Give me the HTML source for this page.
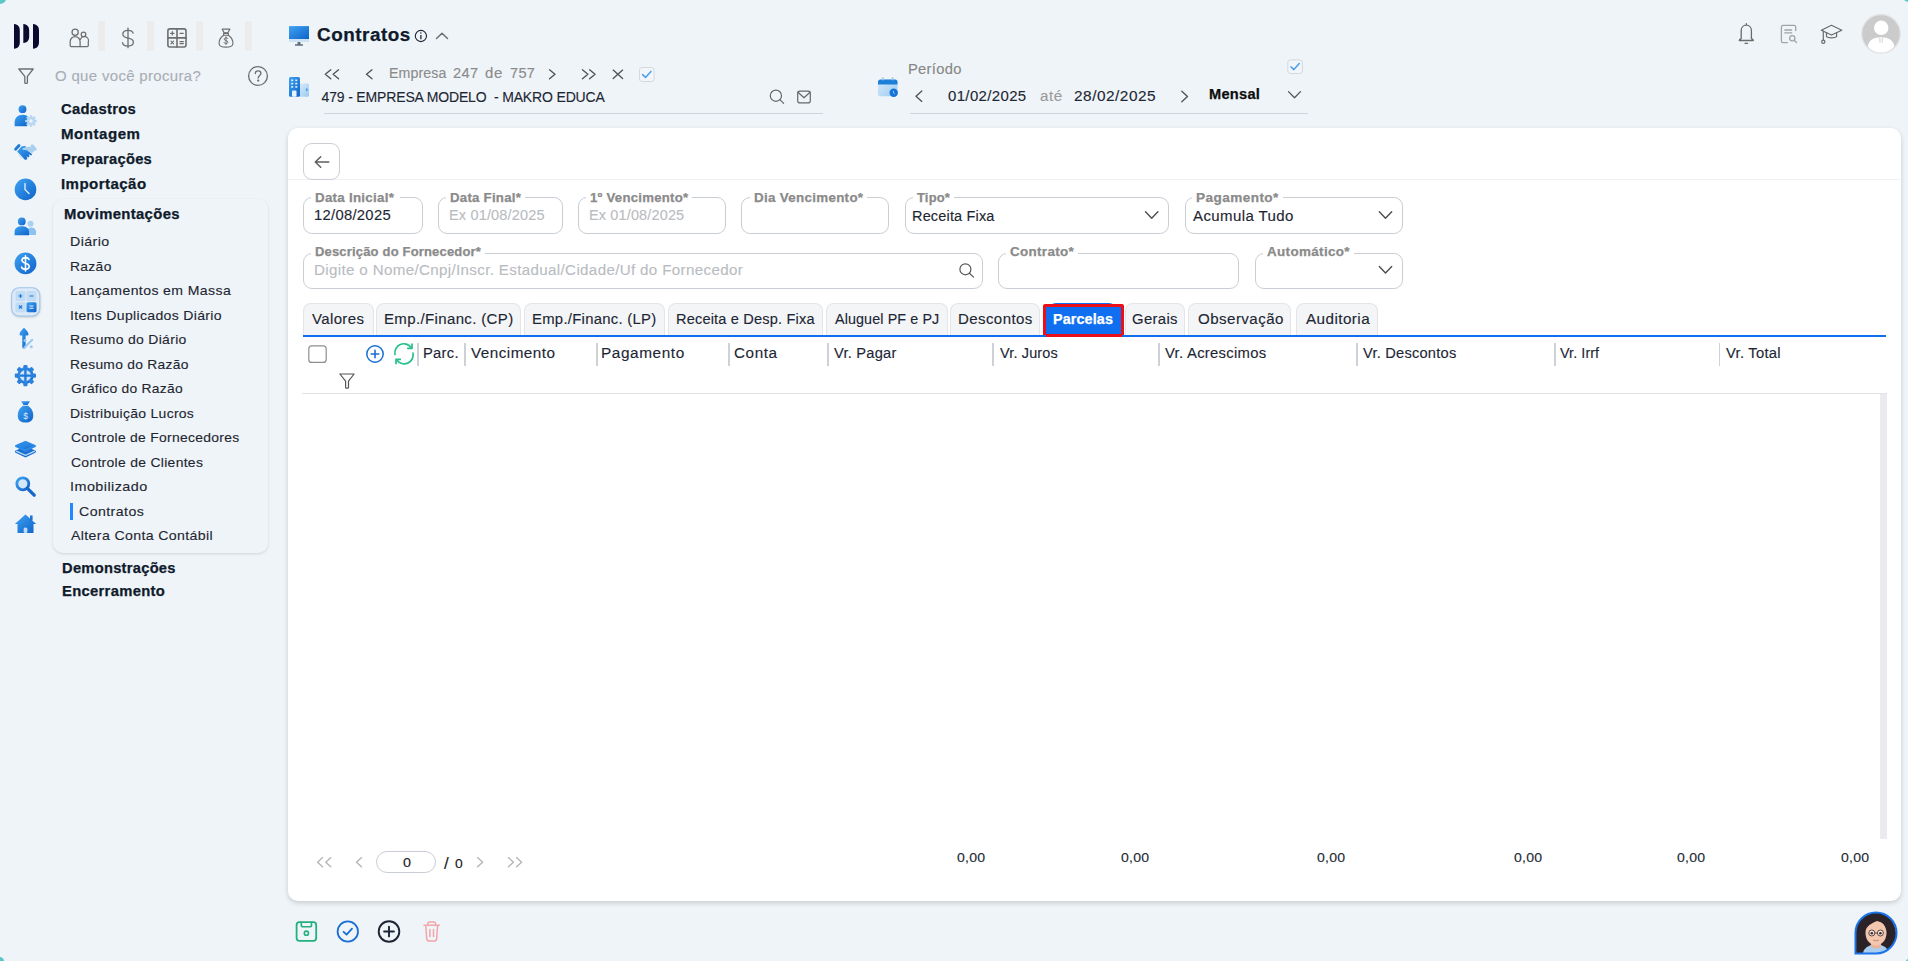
<!DOCTYPE html>
<html><head><meta charset="utf-8">
<style>
*{box-sizing:border-box;margin:0;padding:0}
html,body{width:1908px;height:961px;overflow:hidden;background:#eff4f8;font-family:"Liberation Sans",sans-serif}
.t{position:absolute;white-space:nowrap;-webkit-text-stroke:0.12px currentColor}
.b{-webkit-text-stroke:0.25px currentColor}
.a{position:absolute}
.fld{position:absolute;border:1px solid #c9ced5;border-radius:9px;background:#fff}
.lblbg{position:absolute;background:#fff;height:4px}
.tab{position:absolute;top:303px;height:32px;background:#f4f5f6;border:1px solid #e3e5e8;border-bottom:none;border-radius:8px 8px 0 0}
.sep{position:absolute;top:343px;width:1.6px;height:22.5px;background:#cdd1d8}
</style></head><body>
<!-- corners -->
<div class="a" style="left:-7px;top:-6px;width:13px;height:10px;border-radius:50%;background:#5cc7c7"></div>
<div class="a" style="left:1904px;top:-4px;width:10px;height:6px;border-radius:50%;background:#5cc7c7"></div>
<div class="a" style="left:-5px;top:957px;width:9px;height:8px;border-radius:50%;background:#5cc7c7"></div>
<div class="a" style="left:1906px;top:959px;width:5px;height:5px;border-radius:50%;background:#5cc7c7"></div>

<!-- sidebar submenu card -->
<div class="a" style="left:53px;top:199px;width:215px;height:354px;border-radius:10px;background:#eff4f8;box-shadow:0 1px 3px rgba(0,0,0,0.13)"></div>
<div class="a" style="left:70.3px;top:503px;width:2.9px;height:17px;background:#2089ff"></div>

<!-- top separators -->
<div class="a" style="left:98px;top:21px;width:7px;height:30px;background:#ececec"></div>
<div class="a" style="left:147px;top:21px;width:7px;height:30px;background:#ececec"></div>
<div class="a" style="left:196px;top:21px;width:7px;height:30px;background:#ececec"></div>
<div class="a" style="left:245px;top:21px;width:7px;height:30px;background:#ececec"></div>

<!-- underlines -->
<div class="a" style="left:324px;top:113px;width:499px;height:1px;background:#d0d4da"></div>
<div class="a" style="left:910px;top:113px;width:398px;height:1px;background:#d0d4da"></div>

<!-- main card -->
<div class="a" style="left:288px;top:128px;width:1613px;height:773px;border-radius:10px;background:#fff;box-shadow:0 2px 5px rgba(0,0,0,0.17)"></div>
<div class="a" style="left:288px;top:178.5px;width:1613px;height:1px;background:#f1f2f4"></div>
<div class="a" style="left:303px;top:143px;width:36.6px;height:36.6px;border:1px solid #c9ced5;border-radius:9px;background:#fff"></div>

<!-- fields row 1 -->
<div class="fld" style="left:303px;top:197.3px;width:120px;height:36.4px"></div>
<div class="fld" style="left:438px;top:197.3px;width:125px;height:36.4px"></div>
<div class="fld" style="left:578px;top:197.3px;width:147.7px;height:36.4px"></div>
<div class="fld" style="left:741px;top:197.3px;width:148.3px;height:36.4px"></div>
<div class="fld" style="left:905px;top:197.3px;width:264.2px;height:36.4px"></div>
<div class="fld" style="left:1185px;top:197.3px;width:217.5px;height:36.4px"></div>
<!-- fields row 2 -->
<div class="fld" style="left:303px;top:252.5px;width:679.5px;height:36px"></div>
<div class="fld" style="left:998px;top:252.5px;width:241.4px;height:36px"></div>
<div class="fld" style="left:1255px;top:252.5px;width:147.5px;height:36px"></div>
<!-- label gaps -->
<div class="lblbg" style="left:310.6px;top:195px;width:89px"></div>
<div class="lblbg" style="left:446px;top:195px;width:79px"></div>
<div class="lblbg" style="left:586px;top:195px;width:106px"></div>
<div class="lblbg" style="left:749.5px;top:195px;width:117px"></div>
<div class="lblbg" style="left:913px;top:195px;width:41px"></div>
<div class="lblbg" style="left:1192px;top:195px;width:90.5px"></div>
<div class="lblbg" style="left:310.6px;top:250.5px;width:174px"></div>
<div class="lblbg" style="left:1006px;top:250.5px;width:72px"></div>
<div class="lblbg" style="left:1263px;top:250.5px;width:90.5px"></div>

<!-- tabs -->
<div class="tab" style="left:303.2px;width:70.4px"></div>
<div class="tab" style="left:376.3px;width:145.1px"></div>
<div class="tab" style="left:524.1px;width:141.4px"></div>
<div class="tab" style="left:668.3px;width:155.2px"></div>
<div class="tab" style="left:826.3px;width:121.3px"></div>
<div class="tab" style="left:950.4px;width:90px"></div>
<div class="a" style="left:1049px;top:302.6px;width:67px;height:10px;background:#0f6ff0;border-radius:7px 7px 0 0"></div>
<div class="a" style="left:1043.2px;top:304px;width:80.5px;height:32.7px;background:#0f6ff0;border:3px solid #ea0f18;border-radius:2px"></div>
<div class="tab" style="left:1125px;width:60.4px"></div>
<div class="tab" style="left:1188.1px;width:103.4px"></div>
<div class="tab" style="left:1296.3px;width:81.6px"></div>
<div class="a" style="left:303px;top:335px;width:1583px;height:2.2px;background:#0f6ff0"></div>
<div class="a" style="left:1045.5px;top:335px;width:76px;height:2px;background:#ea0f18"></div>

<!-- table header -->
<div class="sep" style="left:417.2px"></div>
<div class="sep" style="left:464px"></div>
<div class="sep" style="left:596px"></div>
<div class="sep" style="left:728px"></div>
<div class="sep" style="left:827.2px"></div>
<div class="sep" style="left:992.2px"></div>
<div class="sep" style="left:1158px"></div>
<div class="sep" style="left:1356.4px"></div>
<div class="sep" style="left:1554.1px"></div>
<div class="sep" style="left:1718.9px"></div>
<div class="a" style="left:302px;top:393px;width:1585px;height:1px;background:#e2e3e5"></div>
<div class="a" style="left:1880.2px;top:394px;width:6.8px;height:444.7px;background:#e9ebee"></div>

<!-- pagination input -->
<div class="a" style="left:376.2px;top:851.3px;width:59.4px;height:21.5px;border:1px solid #c9ced5;border-radius:11px"></div>

<!-- bottom avatar -->
<svg class="a" style="left:1854px;top:911px" width="44" height="44" viewBox="0 0 44 44">
<defs><clipPath id="avc"><path d="M1.5,42.5 V22 A20.5,20.5 0 1 1 22,42.5 Z"/></clipPath></defs>
<g clip-path="url(#avc)">
<rect x="0" y="0" width="44" height="44" fill="#2b2327"/>
<path d="M30,2 Q40,8 42,22 L44,0 Z" fill="#8d8488"/>
<path d="M8,44 Q10,34 22,33 Q34,34 36,44 Z" fill="#a9cdf0"/>
<path d="M17,30 H27 V36 Q22,39 17,36 Z" fill="#e9b49a"/>
<ellipse cx="22" cy="22" rx="10.5" ry="12.5" fill="#f3c7ae"/>
<path d="M10,20 Q12,7 24,6.5 Q33,7 34.5,18 Q30,11 23,10 Q16,12 10,20 Z" fill="#2b2327"/>
<path d="M10.5,19 Q11,30 9,42 L6,42 Q5,25 10.5,19 Z" fill="#2b2327"/>
<path d="M33.5,18 Q34,30 36,40 L40,40 Q39,25 33.5,18 Z" fill="#2b2327"/>
<circle cx="17.8" cy="22" r="3" fill="#fbe9df" stroke="#4a3434" stroke-width="0.9"/>
<circle cx="26.4" cy="22" r="3" fill="#fbe9df" stroke="#4a3434" stroke-width="0.9"/>
<circle cx="17.8" cy="22.2" r="1.3" fill="#3a2a2a"/>
<circle cx="26.4" cy="22.2" r="1.3" fill="#3a2a2a"/>
<path d="M20.8,22 H23.4" stroke="#4a3434" stroke-width="0.8"/>
<path d="M19,29 Q22,30.8 25,29" stroke="#c9806f" stroke-width="0.9" fill="none"/>
</g>
<path d="M1.5,42.5 V22 A20.5,20.5 0 1 1 22,42.5 Z" fill="none" stroke="#1a73e8" stroke-width="2"/>
</svg>
<div class="a" style="left:11.5px;top:287.6px;width:28.5px;height:28.5px;border-radius:8px;box-shadow:0 1px 3px rgba(0,0,0,0.22)"></div>
<svg class="a" style="left:0;top:0" width="1908" height="961" viewBox="0 0 1908 961">
<defs>
<linearGradient id="gb" x1="0" y1="0" x2="1" y2="1"><stop offset="0" stop-color="#3ea3f2"/><stop offset="1" stop-color="#0f62c9"/></linearGradient>
<linearGradient id="gl" x1="0" y1="0" x2="1" y2="1"><stop offset="0" stop-color="#d8ebfb"/><stop offset="1" stop-color="#9ccaf1"/></linearGradient>
</defs>
<!-- logo -->
<g fill="#0b0a2e">
<path d="M14,24 C18.6,24.3 19.8,27.5 19.8,31 L19.8,42 C19.8,45.5 18.6,48.5 14,48.8 Z"/>
<path d="M23.3,24 C27.9,24.3 29.2,27.5 29.2,31 L29.2,36.3 C29.2,39.8 27.9,42.8 23.3,43 Z"/>
<path d="M33,24 C37.6,24.3 39,27.5 39,31 L39,42 C39,45.5 37.6,48.5 33,48.8 Z"/>
</g>
<!-- top gray icons -->
<g fill="none" stroke="#6e6e6e" stroke-width="1.25" stroke-linecap="round" stroke-linejoin="round">
<circle cx="75.15" cy="32.2" r="3.1"/>
<path d="M70.2,45.5 V41.5 A4.95,4.95 0 0 1 80.1,41.5 V46.5 H71.2 Q70.2,46.5 70.2,45.5 Z"/>
<circle cx="83.5" cy="34.4" r="2.3"/>
<path d="M80.4,39.4 A4.1,4.1 0 0 1 88.3,41.9 V45.6 Q88.3,46.5 87.4,46.5 H80.1"/>
<path d="M128,28.2 V47.7" stroke-width="1.3"/>
<path d="M133.1,33.2 C132.7,31.3 130.8,30.3 128,30.3 C124.6,30.3 122.8,32 122.8,34.3 C122.8,39.8 133.4,36.6 133.4,42.1 C133.4,44.6 131.2,46.1 128,46.1 C124.8,46.1 122.8,44.7 122.5,42.6" stroke-width="1.3"/>
<rect x="167.9" y="28.9" width="18.1" height="18.1" rx="2" stroke-width="1.6"/>
<path d="M177,28.9 V47 M167.9,37.9 H186" stroke-width="1.6"/>
<path d="M170.6,33.3 H174 M172.3,31.6 V35 M180,33.3 H183.3 M171,41.2 L173.6,43.8 M173.6,41.2 L171,43.8 M179.9,41.6 H183.4 M179.9,43.6 H183.4" stroke-width="1.2"/>
<path d="M222.2,29.2 H229.8 L227.9,32.8 H224.1 Z" stroke-width="1.2"/>
<path d="M223.6,33.4 H228.4 V35.2 H223.6 Z" stroke-width="1.1"/>
<path d="M223.6,35.3 C219.6,38.2 218.9,41.8 219.1,44 C219.4,46.4 221.8,47.1 226,47.1 C230.2,47.1 232.6,46.4 232.9,44 C233.1,41.8 232.4,38.2 228.4,35.3" stroke-width="1.2"/>
<path d="M227.8,38.6 C227.4,37.9 226.8,37.7 226,37.7 C224.9,37.7 224.2,38.3 224.2,39.1 C224.2,41 227.9,40.2 227.9,42.2 C227.9,43 227.1,43.6 226,43.6 C225,43.6 224.3,43.2 224,42.5 M226,36.8 V44.4" stroke-width="1"/>
<!-- filter sidebar -->
<path d="M18.8,69 H33.2 L27.4,76.3 V82.5 Q27.4,83.4 26.5,83.4 H25.6 Q24.8,83.4 24.8,82.5 V76.3 Z" stroke-width="1.3"/>
<circle cx="258" cy="76" r="9.4" stroke-width="1.35"/>
<path d="M255.3,73.6 C255.3,71.9 256.5,70.9 258.1,70.9 C259.8,70.9 260.9,72 260.9,73.4 C260.9,75.4 258.2,75.6 258.2,77.9" stroke-width="1.35"/>
<circle cx="258.2" cy="80.6" r="0.5" fill="#6e6e6e"/>
<!-- chevron up -->
<path d="M436.5,38.5 L442,33.2 L447.5,38.5" stroke-width="1.5"/>
</g>
<!-- monitor -->
<rect x="289" y="26.1" width="20" height="13" fill="url(#gb)"/>
<rect x="289" y="39" width="20" height="3" fill="#cfe2f3"/>
<path d="M297.5,42 H300.5 V44.3 H303 V45.7 H295 V44.3 H297.5 Z" fill="#5d6f7e"/>
<!-- info -->
<circle cx="420.9" cy="36" r="5.6" fill="none" stroke="#1c2634" stroke-width="1.1"/>
<path d="M420.9,35 V39.2" stroke="#1c2634" stroke-width="1.3"/>
<circle cx="420.9" cy="33.1" r="0.75" fill="#1c2634"/>
<!-- building -->
<rect x="299" y="83.5" width="10" height="13.3" rx="1.5" fill="url(#gl)"/>
<rect x="289" y="77" width="11" height="19.8" rx="1.5" fill="url(#gb)"/>
<g fill="#e8f3fd"><rect x="291.2" y="79.5" width="2" height="1.6"/><rect x="295.3" y="79.5" width="2" height="1.6"/><rect x="291.2" y="82.8" width="2" height="1.6"/><rect x="295.3" y="82.8" width="2" height="1.6"/><rect x="291.2" y="86.1" width="2" height="1.6"/><rect x="295.3" y="86.1" width="2" height="1.6"/><rect x="292" y="90.5" width="4.5" height="6.3" rx="1"/></g>
<rect x="306" y="88.5" width="1.5" height="2.5" fill="#3b97ea"/>
<!-- empresa nav -->
<g fill="none" stroke="#505050" stroke-width="1.3" stroke-linecap="round" stroke-linejoin="round">
<path d="M330.8,69.8 L325.3,74.3 L330.8,78.8 M338.6,69.8 L333.1,74.3 L338.6,78.8"/>
<path d="M372,69.8 L366.5,74.3 L372,78.8"/>
<path d="M549.5,69.8 L555,74.3 L549.5,78.8"/>
<path d="M582.4,69.8 L587.9,74.3 L582.4,78.8 M589.6,69.8 L595.1,74.3 L589.6,78.8"/>
<path d="M613.2,70.1 L622.6,78.5 M622.6,70.1 L613.2,78.5"/>
</g>
<rect x="639.5" y="67.5" width="14.6" height="14" rx="2.6" fill="#f2f5f9" stroke="#d5d8dc" stroke-width="1"/>
<path d="M642.6,74.6 L645.5,77.4 L651,71.4" fill="none" stroke="#4aa0ef" stroke-width="1.5" stroke-linecap="round" stroke-linejoin="round"/>
<g fill="none" stroke="#676767" stroke-width="1.2" stroke-linecap="round" stroke-linejoin="round">
<circle cx="775.9" cy="95.7" r="5.6"/>
<path d="M779.9,99.7 L783.6,103.4"/>
<rect x="797.7" y="91.1" width="12.6" height="11.8" rx="2.2"/>
<path d="M798,92.2 L804,97.8 L810,92.2"/>
</g>
<!-- calendar -->
<rect x="878" y="79.5" width="19.5" height="16.8" rx="2.5" fill="url(#gl)"/>
<path d="M878,82 Q878,79.5 880.5,79.5 H895 Q897.5,79.5 897.5,82 V84.5 H878 Z" fill="#1e7fd8"/>
<rect x="882" y="77" width="1.6" height="3.5" rx="0.8" fill="#9cc9ef"/>
<rect x="891.8" y="77" width="1.6" height="3.5" rx="0.8" fill="#9cc9ef"/>
<circle cx="893.7" cy="92.7" r="4.2" fill="#1573d8"/>
<path d="M893.4,90.8 V92.8 L894.9,94" fill="none" stroke="#bfe0fb" stroke-width="0.8"/>
<g fill="none" stroke="#505050" stroke-width="1.3" stroke-linecap="round" stroke-linejoin="round">
<path d="M921.8,91 L916,96.2 L921.8,101.4"/>
<path d="M1181.8,91.3 L1187.5,96.5 L1181.8,101.7"/>
<path d="M1288.5,91.6 L1294.5,97.7 L1300.5,91.6" stroke="#555"/>
</g>
<rect x="1287.8" y="59.9" width="14.6" height="13.6" rx="2.6" fill="#f2f5f9" stroke="#d5d8dc" stroke-width="1"/>
<path d="M1290.9,66.8 L1293.8,69.6 L1299.3,63.6" fill="none" stroke="#4aa0ef" stroke-width="1.5" stroke-linecap="round" stroke-linejoin="round"/>
<!-- top right -->
<g fill="none" stroke="#6b6b6b" stroke-width="1.3" stroke-linecap="round" stroke-linejoin="round">
<path d="M1746.3,23.6 V25.2 M1741.2,38.6 V30.5 C1741.2,27.3 1743.5,25.2 1746.3,25.2 C1749.1,25.2 1751.4,27.3 1751.4,30.5 V38.6 C1752.8,39.2 1753.3,39.8 1753.3,40.5 H1739.3 C1739.3,39.8 1739.8,39.2 1741.2,38.6 Z"/>
<path d="M1745,43.3 H1747.6" stroke-width="1.2"/>
<circle cx="1823.3" cy="41.7" r="1.6" stroke-width="1.2"/>
<path d="M1821.3,30.2 L1831.5,25.3 L1841.8,30.2 L1831.5,35 Z" stroke-width="1.25"/>
<path d="M1823.3,31.2 V40.1 M1826.5,32.6 V36.6 C1828,38.2 1835,38.2 1836.6,36.6 V32.6" stroke-width="1.2"/>
</g>
<g fill="none" stroke="#a3a3a3" stroke-width="1.3" stroke-linecap="round">
<path d="M1795.7,30.6 V26.9 Q1795.7,25.3 1794,25.3 H1783.1 Q1781.4,25.3 1781.4,27 V40.9 Q1781.4,42.6 1783.1,42.6 H1787.5"/>
<path d="M1784.8,30 H1791.7 M1784.8,32.9 H1791.7"/>
<circle cx="1792.3" cy="38.3" r="2.6"/>
<path d="M1794.2,40.2 L1796.5,42.5"/>
</g>
<circle cx="1881" cy="33.8" r="19.3" fill="#cbcbcb" stroke="#e4e4e4" stroke-width="1.3"/>
<circle cx="1881.2" cy="27.8" r="7.2" fill="#fff"/>
<path d="M1867.8,46.5 C1868.5,40.3 1873.5,37.3 1881,37.3 C1888.5,37.3 1893.5,40.3 1894.3,46.5 C1891,50.5 1886.5,52.6 1881,52.6 C1875.5,52.6 1871,50.5 1867.8,46.5 Z" fill="#fff"/>
<path d="M1879.8,38 L1880,42.8 M1882.3,38 L1882.1,42.8" stroke="#cbcbcb" stroke-width="0.9"/>

<!-- back arrow -->
<path d="M328.8,162 H315.5 M320.7,156.8 L315.3,162 L320.7,167.2" fill="none" stroke="#5e5e5e" stroke-width="1.5" stroke-linecap="round" stroke-linejoin="round"/>
<!-- field chevrons / search -->
<g fill="none" stroke="#4b4b4b" stroke-width="1.35" stroke-linecap="round" stroke-linejoin="round">
<path d="M1145.5,211.8 L1151.7,218.3 L1157.9,211.8"/>
<path d="M1379.3,211.8 L1385.5,218.3 L1391.7,211.8"/>
<path d="M1379.3,266.5 L1385.5,273 L1391.7,266.5"/>
</g>
<g fill="none" stroke="#555" stroke-width="1.2" stroke-linecap="round">
<circle cx="965.4" cy="269.3" r="5.5"/>
<path d="M969.4,273.3 L973.5,277.1"/>
</g>
<!-- table header icons -->
<rect x="308.8" y="345.8" width="17.4" height="16.6" rx="3" fill="#fff" stroke="#8e8e8e" stroke-width="1.2"/>
<circle cx="375" cy="354" r="8.2" fill="none" stroke="#1b6fd4" stroke-width="1.5"/>
<path d="M375,350.2 V357.8 M371.2,354 H378.8" stroke="#1b6fd4" stroke-width="1.6" stroke-linecap="round"/>
<g fill="none" stroke="#22c08d" stroke-width="1.7" stroke-linecap="round" stroke-linejoin="round">
<path d="M395,354.5 A9,9 0 0 1 411.2,347.6"/>
<path d="M413,353 A9,9 0 0 1 396.8,360"/>
<path d="M412,344 V348.3 H407.8"/>
<path d="M396,363.6 V359.4 H400.2"/>
</g>
<path d="M339.9,374 H354.1 L348.5,381.2 V387.3 Q348.5,388.2 347.6,388.2 H346.5 Q345.6,388.2 345.6,387.3 V381.2 Z" fill="none" stroke="#555" stroke-width="1.2" stroke-linejoin="round"/>
<!-- pagination -->
<g fill="none" stroke="#b3b3b3" stroke-width="1.3" stroke-linecap="round" stroke-linejoin="round">
<path d="M322.6,857.6 L317.6,862.2 L322.6,866.8 M330.8,857.6 L325.8,862.2 L330.8,866.8"/>
<path d="M361.5,857.6 L356.5,862.2 L361.5,866.8"/>
<path d="M477.6,857.6 L482.6,862.2 L477.6,866.8"/>
<path d="M508.4,857.6 L513.4,862.2 L508.4,866.8 M516.6,857.6 L521.6,862.2 L516.6,866.8"/>
</g>
<!-- bottom actions -->
<g fill="none" stroke-linecap="round" stroke-linejoin="round">
<path d="M299.4,922.2 H313.4 Q316.2,922.2 316.2,925 V938 Q316.2,940.8 313.4,940.8 H299.4 Q296.6,940.8 296.6,938 V925 Q296.6,922.2 299.4,922.2 Z" stroke="#22b07d" stroke-width="1.8"/>
<path d="M301.3,922.4 V925 Q301.3,926.8 303,926.8 H309.8 Q311.5,926.8 311.5,925 V922.4" stroke="#22b07d" stroke-width="1.6"/>
<circle cx="306.4" cy="933.2" r="2.1" stroke="#22b07d" stroke-width="1.6"/>
<circle cx="347.8" cy="931.5" r="10.2" stroke="#1b6fd4" stroke-width="1.8"/>
<path d="M343.6,931.8 L346.6,934.6 L352,928.7" stroke="#1b6fd4" stroke-width="1.8"/>
<circle cx="389" cy="931.5" r="10.3" stroke="#1c2634" stroke-width="1.9"/>
<path d="M389,926.6 V936.4 M384.1,931.5 H393.9" stroke="#1c2634" stroke-width="1.9"/>
<path d="M424,925.2 H439.4 M427.8,925 V923.7 Q427.8,922 429.5,922 H433.9 Q435.6,922 435.6,923.7 V925 M425.8,925.5 L426.7,938.6 Q426.9,941 429.3,941 H434.1 Q436.5,941 436.7,938.6 L437.6,925.5 M429.9,929.5 V936.6 M433.5,929.5 V936.6" stroke="#f3a6aa" stroke-width="1.5"/>
</g>

<!-- sidebar blue icons -->
<!-- 1 user gear -->
<circle cx="22.5" cy="109.2" r="3.9" fill="url(#gb)"/>
<path d="M14.6,126.2 V122.5 C14.6,117.8 18,114.8 22.5,114.8 C25,114.8 27,115.6 28.3,117 L27,126.2 Z" fill="url(#gb)"/>
<g transform="translate(31,121)"><circle r="4.2" fill="#b7d7f3"/><g fill="#b7d7f3"><rect x="-1.2" y="-5.8" width="2.4" height="11.6"/><rect x="-5.8" y="-1.2" width="11.6" height="2.4"/><rect x="-1.2" y="-5.8" width="2.4" height="11.6" transform="rotate(45)"/><rect x="-1.2" y="-5.8" width="2.4" height="11.6" transform="rotate(-45)"/></g><circle r="1.7" fill="#eff4f8"/></g>
<!-- 2 handshake -->
<path d="M15.6,149.2 L19,145.6" stroke="#1f7ad8" stroke-width="2.9" stroke-linecap="round"/>
<path d="M32.3,145.7 L35.3,149.1" stroke="#a9cff0" stroke-width="2.9" stroke-linecap="round"/>
<path d="M22.5,148.3 L26,147.3 L31,146.4 L35,150 L32,153.2 L27,150.3 L22.8,149.8 Z" fill="#a9cff0"/>
<path d="M17.2,151.5 L21.5,146.6 Q23,145.9 25.8,146.2 L26,147.3 L22.5,148.3 L22.8,149.8 L27,150.3 L32.2,154.3 L31.2,155.6 L28.6,154.2 L29.5,156.2 L28.4,157.6 L26.5,156.2 L27.4,158.6 L26,160 L24.6,159.6 Z" fill="url(#gb)"/>
<path d="M17.5,153 L19,154.5 M19,155.2 L20.6,156.8 M20.8,157 L22.2,158.4" stroke="#cfe3f6" stroke-width="1.2"/>
<!-- 3 clock -->
<circle cx="25.5" cy="189.4" r="10.8" fill="url(#gb)"/>
<path d="M25,183.5 V189.4 L29,193.5" fill="none" stroke="#d9ecfc" stroke-width="1.4" stroke-linecap="round"/>
<!-- 4 users -->
<circle cx="30.5" cy="223.8" r="3" fill="#a9d0f3"/>
<path d="M27,235 V231.5 C27,228.8 29,227.6 31,227.6 C33.5,227.6 36,229 36,232 V235 Z" fill="#8ec1ee"/>
<circle cx="21.8" cy="221.4" r="3.9" fill="url(#gb)"/>
<path d="M14.6,235.2 V231.8 C14.6,228 17.5,226.2 21.8,226.2 C26.1,226.2 29,228 29,231.8 V235.2 Z" fill="url(#gb)"/>
<!-- 5 dollar circle -->
<circle cx="25.5" cy="263.4" r="10.9" fill="url(#gb)"/>
<path d="M29,259.4 C28.5,258.3 27.3,257.6 25.5,257.6 C23.4,257.6 22,258.7 22,260.3 C22,264 29.2,262.3 29.2,266.3 C29.2,268 27.7,269.2 25.5,269.2 C23.5,269.2 22.1,268.4 21.6,267.1 M25.5,255.8 V271" fill="none" stroke="#fff" stroke-width="1.6" stroke-linecap="round"/>
<!-- 6 calculator highlighted -->
<rect x="11.6" y="287.8" width="28.2" height="28.2" rx="7.5" fill="#dceaf7" stroke="#9fc6ec" stroke-width="1.1"/>
<rect x="15.5" y="291" width="10" height="10" rx="1.5" fill="#c2dcf4"/>
<rect x="26.5" y="291" width="10" height="10" rx="1.5" fill="#c2dcf4"/>
<rect x="15.5" y="302.2" width="10" height="10" rx="1.5" fill="#c2dcf4"/>
<rect x="26.5" y="302.2" width="10" height="10" rx="1.5" fill="url(#gb)"/>
<path d="M18.5,296 H22.5 M20.5,294 V298 M29.5,296 H33.5 M19,305.5 L22,308.5 M22,305.5 L19,308.5" stroke="#1f79d6" stroke-width="1.2"/>
<path d="M29.5,306 H33.5 M29.5,308.3 H33.5" stroke="#e7f2fc" stroke-width="1.1"/>
<!-- 7 arrow percent -->
<path d="M24,327.8 C21.5,330 19.5,332.5 19.5,334.5 Q19.5,335.6 20.8,335.6 H22.3 V347.5 Q22.3,348.6 23.6,348.6 H24.3 Q25.6,348.6 25.6,347.5 V335.6 H27.2 Q28.5,335.6 28.5,334.5 C28.5,332.5 26.5,330 24,327.8 Z" fill="url(#gb)"/>
<path d="M24.3,347.8 L32.2,339.8" stroke="#9ccaf1" stroke-width="2.2" stroke-linecap="round"/>
<circle cx="25" cy="340.6" r="1.5" fill="#9ccaf1"/><circle cx="31.3" cy="346.8" r="1.5" fill="#9ccaf1"/>
<!-- 8 gear cross -->
<g transform="translate(25.4,375.6)"><circle r="8.3" fill="url(#gb)"/><g fill="#2a82dc"><rect x="-2.1" y="-10.6" width="4.2" height="21.2" rx="1"/><rect x="-10.6" y="-2.1" width="21.2" height="4.2" rx="1"/><rect x="-2.1" y="-10.6" width="4.2" height="21.2" rx="1" transform="rotate(45)"/><rect x="-2.1" y="-10.6" width="4.2" height="21.2" rx="1" transform="rotate(-45)"/></g><circle r="5.6" fill="#cfe3f6"/><path d="M0,-5.6 V5.6 M-5.6,0 H5.6" stroke="#1f7ad9" stroke-width="2.3"/></g>
<!-- 9 money bag -->
<path d="M21.2,401.3 H29.8 L27.6,405 H23.4 Z" fill="url(#gb)"/>
<path d="M23,405.8 C18.5,408.8 17.6,413 17.8,416.3 C18.1,420.8 21,422.6 25.5,422.6 C30,422.6 32.9,420.8 33.2,416.3 C33.4,413 32.5,408.8 28,405.8 Z" fill="url(#gb)"/>
<text x="25.5" y="419" font-size="8.5" font-family="Liberation Sans" fill="#d8ecfd" text-anchor="middle">$</text>
<!-- 10 layers -->
<path d="M25.5,447.5 L34.8,451.6 L25.5,456.3 L16.2,451.6 Z" fill="#1a6fd0" stroke="#1a6fd0" stroke-width="2.4" stroke-linejoin="round"/>
<path d="M16.2,451.2 L25.5,455.4 L34.8,451.2" fill="none" stroke="#bcdcf6" stroke-width="1.3"/>
<path d="M25.5,442 L34.8,446 L25.5,450.6 L16.2,446 Z" fill="url(#gb)" stroke="#2a8ae6" stroke-width="2.4" stroke-linejoin="round"/>
<!-- 11 search -->
<circle cx="22.8" cy="483.8" r="6" fill="#d4e8fa" stroke="url(#gb)" stroke-width="2.8"/>
<path d="M27.6,488.6 L34.2,495.2" stroke="#1567cc" stroke-width="3.3" stroke-linecap="round"/>
<!-- 12 home -->
<path d="M25.5,514.5 L14.8,524 H17.5 V533 H33.5 V524 H36.2 Z" fill="url(#gb)"/>
<rect x="30" y="515.5" width="2.6" height="5" fill="#1e73d2"/>
<rect x="23.6" y="527.5" width="3.8" height="5.5" rx="1.5" fill="#bcdaf5"/>
</svg>
<div class="t" style="left:55.20px;top:69.00px;font-size:14px;line-height:14px;font-weight:400;color:#a9aeb5;letter-spacing:0.313px;transform:scaleX(1.0689);transform-origin:0 0;">O que você procura?</div>
<div class="t b" style="left:61.30px;top:102.00px;font-size:14px;line-height:14px;font-weight:700;color:#0f1b2b;letter-spacing:0.299px;transform:scaleX(1.0552);transform-origin:0 0;">Cadastros</div>
<div class="t b" style="left:61.30px;top:127.00px;font-size:14px;line-height:14px;font-weight:700;color:#0f1b2b;letter-spacing:0.475px;transform:scaleX(1.0772);transform-origin:0 0;">Montagem</div>
<div class="t b" style="left:61.30px;top:152.00px;font-size:14px;line-height:14px;font-weight:700;color:#0f1b2b;letter-spacing:0.257px;transform:scaleX(1.0479);transform-origin:0 0;">Preparações</div>
<div class="t b" style="left:61.30px;top:177.00px;font-size:14px;line-height:14px;font-weight:700;color:#0f1b2b;letter-spacing:0.396px;transform:scaleX(1.0768);transform-origin:0 0;">Importação</div>
<div class="t b" style="left:63.50px;top:207.00px;font-size:14px;line-height:14px;font-weight:700;color:#0f1b2b;letter-spacing:0.329px;transform:scaleX(1.0596);transform-origin:0 0;">Movimentações</div>
<div class="t" style="left:69.91px;top:235.00px;font-size:13px;line-height:13px;font-weight:400;color:#1e2631;letter-spacing:0.372px;transform:scaleX(1.0931);transform-origin:0 0;">Diário</div>
<div class="t" style="left:69.94px;top:260.00px;font-size:13px;line-height:13px;font-weight:400;color:#1e2631;letter-spacing:0.344px;transform:scaleX(1.0603);transform-origin:0 0;">Razão</div>
<div class="t" style="left:69.92px;top:284.00px;font-size:13px;line-height:13px;font-weight:400;color:#1e2631;letter-spacing:0.372px;transform:scaleX(1.0811);transform-origin:0 0;">Lançamentos em Massa</div>
<div class="t" style="left:69.92px;top:309.00px;font-size:13px;line-height:13px;font-weight:400;color:#1e2631;letter-spacing:0.299px;transform:scaleX(1.0804);transform-origin:0 0;">Itens Duplicados Diário</div>
<div class="t" style="left:69.93px;top:333.00px;font-size:13px;line-height:13px;font-weight:400;color:#1e2631;letter-spacing:0.303px;transform:scaleX(1.0711);transform-origin:0 0;">Resumo do Diário</div>
<div class="t" style="left:69.94px;top:358.00px;font-size:13px;line-height:13px;font-weight:400;color:#1e2631;letter-spacing:0.285px;transform:scaleX(1.0595);transform-origin:0 0;">Resumo do Razão</div>
<div class="t" style="left:71.00px;top:382.00px;font-size:13px;line-height:13px;font-weight:400;color:#1e2631;letter-spacing:0.263px;transform:scaleX(1.0622);transform-origin:0 0;">Gráfico do Razão</div>
<div class="t" style="left:69.93px;top:407.00px;font-size:13px;line-height:13px;font-weight:400;color:#1e2631;letter-spacing:0.275px;transform:scaleX(1.0723);transform-origin:0 0;">Distribuição Lucros</div>
<div class="t" style="left:71.00px;top:431.00px;font-size:13px;line-height:13px;font-weight:400;color:#1e2631;letter-spacing:0.281px;transform:scaleX(1.0684);transform-origin:0 0;">Controle de Fornecedores</div>
<div class="t" style="left:71.00px;top:456.00px;font-size:13px;line-height:13px;font-weight:400;color:#1e2631;letter-spacing:0.277px;transform:scaleX(1.0716);transform-origin:0 0;">Controle de Clientes</div>
<div class="t" style="left:69.89px;top:480.00px;font-size:13px;line-height:13px;font-weight:400;color:#1e2631;letter-spacing:0.411px;transform:scaleX(1.1058);transform-origin:0 0;">Imobilizado</div>
<div class="t" style="left:79.20px;top:505.00px;font-size:13px;line-height:13px;font-weight:400;color:#1e2631;letter-spacing:0.387px;transform:scaleX(1.0891);transform-origin:0 0;">Contratos</div>
<div class="t" style="left:71.10px;top:529.00px;font-size:13px;line-height:13px;font-weight:400;color:#1e2631;letter-spacing:0.333px;transform:scaleX(1.0879);transform-origin:0 0;">Altera Conta Contábil</div>
<div class="t b" style="left:61.50px;top:561.00px;font-size:14px;line-height:14px;font-weight:700;color:#0f1b2b;letter-spacing:0.269px;transform:scaleX(1.0481);transform-origin:0 0;">Demonstrações</div>
<div class="t b" style="left:61.50px;top:584.00px;font-size:14px;line-height:14px;font-weight:700;color:#0f1b2b;letter-spacing:0.297px;transform:scaleX(1.0552);transform-origin:0 0;">Encerramento</div>
<div class="t b" style="left:316.60px;top:27.00px;font-size:17.5px;line-height:17.5px;font-weight:700;color:#0f1b2b;letter-spacing:0.496px;transform:scaleX(1.0774);transform-origin:0 0;">Contratos</div>
<div class="t" style="left:388.59px;top:66.00px;font-size:14px;line-height:14px;font-weight:400;color:#8b8b8b;letter-spacing:0.083px;transform:scaleX(1.0137);transform-origin:0 0;">Empresa</div>
<div class="t" style="left:452.50px;top:66.00px;font-size:14px;line-height:14px;font-weight:400;color:#8b8b8b;letter-spacing:0.368px;transform:scaleX(1.0491);transform-origin:0 0;">247</div>
<div class="t" style="left:484.50px;top:66.00px;font-size:14px;line-height:14px;font-weight:400;color:#8b8b8b;letter-spacing:0.644px;transform:scaleX(1.0651);transform-origin:0 0;">de</div>
<div class="t" style="left:509.50px;top:66.00px;font-size:14px;line-height:14px;font-weight:400;color:#8b8b8b;letter-spacing:0.313px;transform:scaleX(1.0414);transform-origin:0 0;">757</div>
<div class="t" style="left:321.50px;top:90.00px;font-size:14px;line-height:14px;font-weight:400;color:#1d2633;letter-spacing:-0.155px;white-space:pre;">479 - EMPRESA MODELO  - MAKRO EDUCA</div>
<div class="t" style="left:907.55px;top:62.00px;font-size:14px;line-height:14px;font-weight:400;color:#878787;letter-spacing:0.269px;transform:scaleX(1.0529);transform-origin:0 0;">Período</div>
<div class="t" style="left:948.40px;top:89.00px;font-size:14px;line-height:14px;font-weight:400;color:#1d2633;letter-spacing:0.337px;transform:scaleX(1.0693);transform-origin:0 0;">01/02/2025</div>
<div class="t" style="left:1040.00px;top:89.00px;font-size:14px;line-height:14px;font-weight:400;color:#9a9a9a;letter-spacing:0.520px;transform:scaleX(1.0861);transform-origin:0 0;">até</div>
<div class="t" style="left:1074.00px;top:89.00px;font-size:14px;line-height:14px;font-weight:400;color:#1d2633;letter-spacing:0.466px;transform:scaleX(1.0983);transform-origin:0 0;">28/02/2025</div>
<div class="t b" style="left:1208.80px;top:87.00px;font-size:14px;line-height:14px;font-weight:700;color:#0d0d0d;letter-spacing:0.255px;transform:scaleX(1.0429);transform-origin:0 0;">Mensal</div>
<div class="t b" style="left:315.40px;top:192.00px;font-size:12.5px;line-height:12.5px;font-weight:700;color:#8a8a8a;letter-spacing:0.250px;transform:scaleX(1.0676);transform-origin:0 0;">Data Inicial*</div>
<div class="t b" style="left:450.30px;top:192.00px;font-size:12.5px;line-height:12.5px;font-weight:700;color:#8a8a8a;letter-spacing:0.237px;transform:scaleX(1.0581);transform-origin:0 0;">Data Final*</div>
<div class="t b" style="left:590.00px;top:192.00px;font-size:12.5px;line-height:12.5px;font-weight:700;color:#8a8a8a;letter-spacing:0.238px;transform:scaleX(1.0542);transform-origin:0 0;">1º Vencimento*</div>
<div class="t b" style="left:753.70px;top:192.00px;font-size:12.5px;line-height:12.5px;font-weight:700;color:#8a8a8a;letter-spacing:0.297px;transform:scaleX(1.0680);transform-origin:0 0;">Dia Vencimento*</div>
<div class="t b" style="left:917.30px;top:192.00px;font-size:12.5px;line-height:12.5px;font-weight:700;color:#8a8a8a;letter-spacing:0.178px;transform:scaleX(1.0356);transform-origin:0 0;">Tipo*</div>
<div class="t b" style="left:1196.40px;top:192.00px;font-size:12.5px;line-height:12.5px;font-weight:700;color:#8a8a8a;letter-spacing:0.415px;transform:scaleX(1.0839);transform-origin:0 0;">Pagamento*</div>
<div class="t b" style="left:315.00px;top:246.00px;font-size:12.5px;line-height:12.5px;font-weight:700;color:#8a8a8a;letter-spacing:0.172px;transform:scaleX(1.0395);transform-origin:0 0;">Descrição do Fornecedor*</div>
<div class="t b" style="left:1010.00px;top:246.00px;font-size:12.5px;line-height:12.5px;font-weight:700;color:#8a8a8a;letter-spacing:0.318px;transform:scaleX(1.0717);transform-origin:0 0;">Contrato*</div>
<div class="t b" style="left:1267.00px;top:246.00px;font-size:12.5px;line-height:12.5px;font-weight:700;color:#8a8a8a;letter-spacing:0.334px;transform:scaleX(1.0728);transform-origin:0 0;">Automático*</div>
<div class="t" style="left:314.34px;top:208.00px;font-size:14px;line-height:14px;font-weight:400;color:#1d2633;letter-spacing:0.274px;transform:scaleX(1.0564);transform-origin:0 0;">12/08/2025</div>
<div class="t" style="left:448.77px;top:208.00px;font-size:14px;line-height:14px;font-weight:400;color:#b9bcc1;letter-spacing:0.167px;transform:scaleX(1.0348);transform-origin:0 0;">Ex 01/08/2025</div>
<div class="t" style="left:588.97px;top:208.00px;font-size:14px;line-height:14px;font-weight:400;color:#b9bcc1;letter-spacing:0.155px;transform:scaleX(1.0321);transform-origin:0 0;">Ex 01/08/2025</div>
<div class="t" style="left:912.36px;top:209.00px;font-size:14px;line-height:14px;font-weight:400;color:#1d2633;letter-spacing:0.161px;transform:scaleX(1.0357);transform-origin:0 0;">Receita Fixa</div>
<div class="t" style="left:1193.30px;top:209.00px;font-size:14px;line-height:14px;font-weight:400;color:#1d2633;letter-spacing:0.371px;transform:scaleX(1.0729);transform-origin:0 0;">Acumula Tudo</div>
<div class="t" style="left:313.92px;top:263.00px;font-size:14px;line-height:14px;font-weight:400;color:#b9bcc1;letter-spacing:0.328px;transform:scaleX(1.0802);transform-origin:0 0;">Digite o Nome/Cnpj/Inscr. Estadual/Cidade/Uf do Fornecedor</div>
<div class="t" style="left:312.30px;top:312.00px;font-size:14px;line-height:14px;font-weight:400;color:#1c2634;letter-spacing:0.341px;transform:scaleX(1.0707);transform-origin:0 0;">Valores</div>
<div class="t" style="left:383.53px;top:312.00px;font-size:14px;line-height:14px;font-weight:400;color:#1c2634;letter-spacing:0.324px;transform:scaleX(1.0736);transform-origin:0 0;">Emp./Financ. (CP)</div>
<div class="t" style="left:532.14px;top:312.00px;font-size:14px;line-height:14px;font-weight:400;color:#1c2634;letter-spacing:0.267px;transform:scaleX(1.0613);transform-origin:0 0;">Emp./Financ. (LP)</div>
<div class="t" style="left:675.76px;top:312.00px;font-size:14px;line-height:14px;font-weight:400;color:#1c2634;letter-spacing:0.173px;transform:scaleX(1.0397);transform-origin:0 0;">Receita e Desp. Fixa</div>
<div class="t" style="left:835.30px;top:312.00px;font-size:14px;line-height:14px;font-weight:400;color:#1c2634;letter-spacing:0.107px;transform:scaleX(1.0230);transform-origin:0 0;">Aluguel PF e PJ</div>
<div class="t" style="left:957.93px;top:312.00px;font-size:14px;line-height:14px;font-weight:400;color:#1c2634;letter-spacing:0.375px;transform:scaleX(1.0742);transform-origin:0 0;">Descontos</div>
<div class="t" style="left:1132.40px;top:312.00px;font-size:14px;line-height:14px;font-weight:400;color:#1c2634;letter-spacing:0.321px;transform:scaleX(1.0621);transform-origin:0 0;">Gerais</div>
<div class="t" style="left:1197.50px;top:312.00px;font-size:14px;line-height:14px;font-weight:400;color:#1c2634;letter-spacing:0.412px;transform:scaleX(1.0793);transform-origin:0 0;">Observação</div>
<div class="t" style="left:1305.50px;top:312.00px;font-size:14px;line-height:14px;font-weight:400;color:#1c2634;letter-spacing:0.386px;transform:scaleX(1.0912);transform-origin:0 0;">Auditoria</div>
<div class="t b" style="left:1052.60px;top:312.00px;font-size:14px;line-height:14px;font-weight:700;color:#ffffff;letter-spacing:0.127px;transform:scaleX(1.0237);transform-origin:0 0;">Parcelas</div>
<div class="t" style="left:422.65px;top:346.00px;font-size:14px;line-height:14px;font-weight:400;color:#1c2634;letter-spacing:0.258px;transform:scaleX(1.0529);transform-origin:0 0;">Parc.</div>
<div class="t" style="left:470.80px;top:346.00px;font-size:14px;line-height:14px;font-weight:400;color:#1c2634;letter-spacing:0.442px;transform:scaleX(1.0885);transform-origin:0 0;">Vencimento</div>
<div class="t" style="left:601.40px;top:346.00px;font-size:14px;line-height:14px;font-weight:400;color:#1c2634;letter-spacing:0.527px;transform:scaleX(1.0981);transform-origin:0 0;">Pagamento</div>
<div class="t" style="left:734.40px;top:346.00px;font-size:14px;line-height:14px;font-weight:400;color:#1c2634;letter-spacing:0.516px;transform:scaleX(1.0899);transform-origin:0 0;">Conta</div>
<div class="t" style="left:833.60px;top:346.00px;font-size:14px;line-height:14px;font-weight:400;color:#1c2634;letter-spacing:0.216px;transform:scaleX(1.0466);transform-origin:0 0;">Vr. Pagar</div>
<div class="t" style="left:999.60px;top:346.00px;font-size:14px;line-height:14px;font-weight:400;color:#1c2634;letter-spacing:0.144px;transform:scaleX(1.0327);transform-origin:0 0;">Vr. Juros</div>
<div class="t" style="left:1164.50px;top:346.00px;font-size:14px;line-height:14px;font-weight:400;color:#1c2634;letter-spacing:0.264px;transform:scaleX(1.0586);transform-origin:0 0;">Vr. Acrescimos</div>
<div class="t" style="left:1362.80px;top:346.00px;font-size:14px;line-height:14px;font-weight:400;color:#1c2634;letter-spacing:0.209px;transform:scaleX(1.0455);transform-origin:0 0;">Vr. Descontos</div>
<div class="t" style="left:1560.20px;top:346.00px;font-size:14px;line-height:14px;font-weight:400;color:#1c2634;letter-spacing:0.084px;transform:scaleX(1.0239);transform-origin:0 0;">Vr. Irrf</div>
<div class="t" style="left:1725.70px;top:346.00px;font-size:14px;line-height:14px;font-weight:400;color:#1c2634;letter-spacing:0.225px;transform:scaleX(1.0571);transform-origin:0 0;">Vr. Total</div>
<div class="t" style="left:957.00px;top:851.00px;font-size:13.5px;line-height:13.5px;font-weight:400;color:#222a35;letter-spacing:0.222px;transform:scaleX(1.0404);transform-origin:0 0;">0,00</div>
<div class="t" style="left:1120.80px;top:851.00px;font-size:13.5px;line-height:13.5px;font-weight:400;color:#222a35;letter-spacing:0.222px;transform:scaleX(1.0404);transform-origin:0 0;">0,00</div>
<div class="t" style="left:1317.30px;top:851.00px;font-size:13.5px;line-height:13.5px;font-weight:400;color:#222a35;letter-spacing:0.222px;transform:scaleX(1.0404);transform-origin:0 0;">0,00</div>
<div class="t" style="left:1513.80px;top:851.00px;font-size:13.5px;line-height:13.5px;font-weight:400;color:#222a35;letter-spacing:0.222px;transform:scaleX(1.0404);transform-origin:0 0;">0,00</div>
<div class="t" style="left:1677.00px;top:851.00px;font-size:13.5px;line-height:13.5px;font-weight:400;color:#222a35;letter-spacing:0.222px;transform:scaleX(1.0404);transform-origin:0 0;">0,00</div>
<div class="t" style="left:1840.50px;top:851.00px;font-size:13.5px;line-height:13.5px;font-weight:400;color:#222a35;letter-spacing:0.222px;transform:scaleX(1.0404);transform-origin:0 0;">0,00</div>
<div class="t" style="left:402.60px;top:856.00px;font-size:13.5px;line-height:13.5px;font-weight:400;color:#1a1a1a;letter-spacing:0.000px;transform:scaleX(1.0600);transform-origin:0 0;">0</div>
<div class="t" style="left:444.00px;top:856.00px;font-size:16px;line-height:16px;font-weight:400;color:#1a1a1a;letter-spacing:0.000px;transform:scaleX(1.0600);transform-origin:0 0;">/</div>
<div class="t" style="left:455.00px;top:857.00px;font-size:13.5px;line-height:13.5px;font-weight:400;color:#1a1a1a;letter-spacing:0.000px;transform:scaleX(1.0257);transform-origin:0 0;">0</div>
</body></html>
